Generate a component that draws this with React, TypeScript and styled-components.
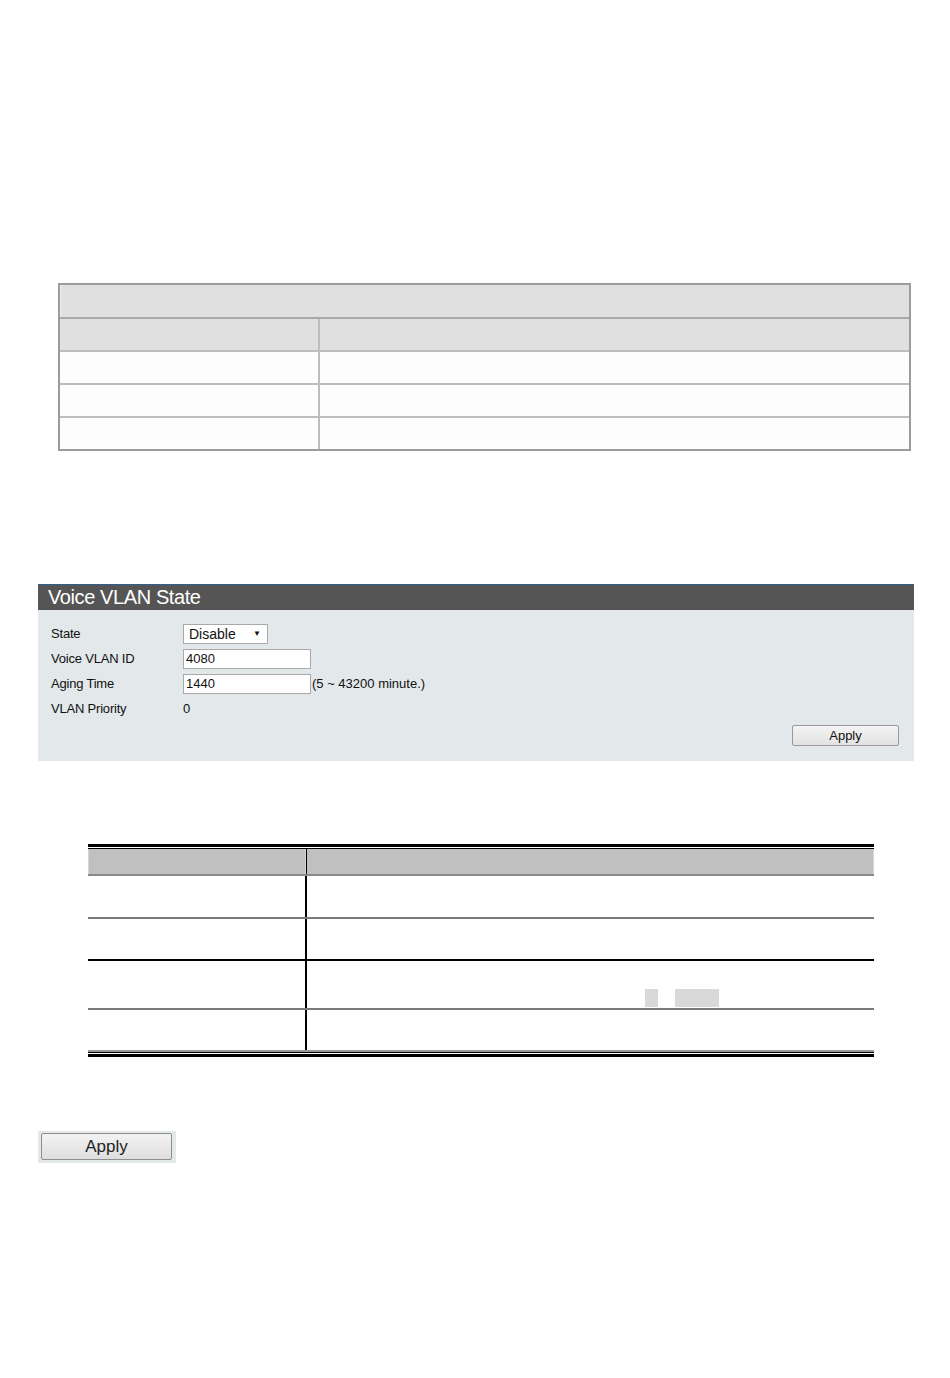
import React from "react";
import styled, { createGlobalStyle } from "styled-components";

const GlobalStyle = createGlobalStyle`
  html, body {
    margin: 0;
    padding: 0;
    background: #ffffff;
  }

  body {
    font-family: "Liberation Sans", Arial, sans-serif;
    color: #000;
  }
`;

const Page = styled.div`
  width: 950px;
  height: 1378px;
  padding-top: 283px;
  box-sizing: border-box;
`;

/* ---------- first (blank) table ---------- */

const GreyTable = styled.div`
  margin-left: 58px;
  width: 853px;
  border: 2px solid #9c9c9c;
  box-sizing: border-box;
  background: #fdfdfd;
`;

const GreyTitle = styled.div`
  height: 32px;
  background: #e0e0e0;
  border-bottom: 2px solid #a8a8a8;
  box-shadow: inset 8px 0 0 -7px #eeeeee;
`;

const GreyRow = styled.div<{ $head?: boolean; $last?: boolean }>`
  display: grid;
  grid-template-columns: 260px 1fr;
  height: 31px;
  background: ${(p) => (p.$head ? "#e0e0e0" : "#fdfdfd")};
  border-bottom: ${(p) => (p.$last ? "none" : "2px solid #bdbdbd")};
`;

const GreyCell = styled.div<{ $first?: boolean }>`
  border-right: ${(p) => (p.$first ? "2px solid #bdbdbd" : "none")};
`;

/* ---------- Voice VLAN panel ---------- */

const Panel = styled.section`
  margin-top: 133px;
  margin-left: 38px;
  width: 876px;
  background: #e3e8eb;
`;

const PanelHeader = styled.h2`
  margin: 0;
  height: 25px;
  border-top: 1px solid #2f5f8f;
  background: #555555;
  color: #ffffff;
  font-size: 20px;
  font-weight: normal;
  line-height: 24px;
  letter-spacing: -0.4px;
  padding-left: 10px;
`;

const PanelBody = styled.div`
  padding: 11px 15px 15px 13px;
  display: flex;
  flex-direction: column;
`;

const FormRow = styled.div`
  display: grid;
  grid-template-columns: 132px auto;
  align-items: center;
  height: 25px;
  font-size: 13px;
  color: #111;
`;

const Label = styled.span`
  letter-spacing: -0.2px;
`;

const Controls = styled.div`
  display: flex;
  align-items: center;
`;

const SelectBox = styled.div`
  width: 85px;
  height: 20px;
  box-sizing: border-box;
  border: 1px solid #a9a9a9;
  background: #ffffff;
  display: flex;
  align-items: center;
  justify-content: space-between;
  padding: 0 6px 0 5px;
  font-size: 14px;
`;

const Arrow = styled.span`
  font-size: 8px;
  line-height: 1;
`;

const TextInput = styled.input`
  width: 128px;
  height: 20px;
  box-sizing: border-box;
  border: 1px solid #a9a9a9;
  background: #ffffff;
  padding: 0 2px;
  margin: 0;
  font-family: "Liberation Sans", Arial, sans-serif;
  font-size: 13px;
  color: #111;
  outline: none;
`;

const Hint = styled.span`
  margin-left: 1px;
  font-size: 13px;
`;

const ButtonRow = styled.div`
  display: flex;
  justify-content: flex-end;
  margin-top: 4px;
`;

const SmallButton = styled.button`
  width: 107px;
  height: 21px;
  border: 1px solid #9a9a9a;
  border-radius: 2px;
  background: linear-gradient(#f4f4f4, #e2e2e2);
  font-family: "Liberation Sans", Arial, sans-serif;
  font-size: 13px;
  color: #111;
  padding: 0;
`;

/* ---------- second (blank) table ---------- */

const RuleTable = styled.div`
  margin-top: 83px;
  margin-left: 88px;
  width: 786px;
  border-top: 3px solid #000;
  border-bottom: 3px solid #000;
`;

const RuleHead = styled.div`
  margin-top: 1px;
  border-top: 1px solid #000;
  display: grid;
  grid-template-columns: 219px 1fr;
  height: 25px;
  background: #c0c0c0;
  border-bottom: 2px solid #8a8a8a;
`;

const HeadCell = styled.div<{ $first?: boolean }>`
  box-shadow: ${(p) =>
    p.$first
      ? "inset 10px 0 0 -9px #d6d6d6, inset -10px 0 0 -9px #d6d6d6"
      : "inset -1px 0 0 #d6d6d6"};
  border-right: ${(p) => (p.$first ? "1px solid #000" : "none")};
`;

const RuleRow = styled.div<{ $h: number; $line: string }>`
  display: grid;
  grid-template-columns: 219px 1fr;
  height: ${(p) => p.$h}px;
  border-bottom: 2px solid ${(p) => p.$line};
`;

const RuleCell = styled.div<{ $first?: boolean }>`
  border-right: ${(p) => (p.$first ? "2px solid #000" : "none")};
  position: relative;
`;

const Blot = styled.span<{ $left: number; $w: number }>`
  position: absolute;
  left: ${(p) => p.$left}px;
  bottom: 1px;
  width: ${(p) => p.$w}px;
  height: 18px;
  background: #d9d9d9;
`;

const BottomRule = styled.div`
  height: 1px;
  margin-bottom: 1px;
  background: #000;
`;

/* ---------- lone Apply button ---------- */

const ApplyFrame = styled.div`
  margin-top: 74px;
  margin-left: 38px;
  width: 138px;
  height: 32px;
  background: #e3e8eb;
  padding: 2px 4px 3px 3px;
  box-sizing: border-box;
`;

const BigButton = styled.button`
  width: 100%;
  height: 100%;
  border: 1px solid #8e8e8e;
  border-radius: 2px;
  background: linear-gradient(#f3f3f3, #dedede);
  font-family: "Liberation Sans", Arial, sans-serif;
  font-size: 17px;
  color: #222;
  padding: 0;
`;

const bodyRows = [
  { h: 41, line: "#7a7a7a" },
  { h: 40, line: "#000000" },
  { h: 47, line: "#7a7a7a", blots: true },
  { h: 40, line: "#9a9a9a" },
];

export default function App() {
  return (
    <Page>
      <GlobalStyle />

      <GreyTable>
        <GreyTitle />
        <GreyRow $head>
          <GreyCell $first />
          <GreyCell />
        </GreyRow>
        {[0, 1, 2].map((i) => (
          <GreyRow key={i} $last={i === 2}>
            <GreyCell $first />
            <GreyCell />
          </GreyRow>
        ))}
      </GreyTable>

      <Panel>
        <PanelHeader>Voice VLAN State</PanelHeader>
        <PanelBody>
          <FormRow>
            <Label>State</Label>
            <Controls>
              <SelectBox>
                <span>Disable</span>
                <Arrow>▼</Arrow>
              </SelectBox>
            </Controls>
          </FormRow>
          <FormRow>
            <Label>Voice VLAN ID</Label>
            <Controls>
              <TextInput defaultValue="4080" />
            </Controls>
          </FormRow>
          <FormRow>
            <Label>Aging Time</Label>
            <Controls>
              <TextInput defaultValue="1440" />
              <Hint>(5 ~ 43200 minute.)</Hint>
            </Controls>
          </FormRow>
          <FormRow>
            <Label>VLAN Priority</Label>
            <span>0</span>
          </FormRow>
          <ButtonRow>
            <SmallButton>Apply</SmallButton>
          </ButtonRow>
        </PanelBody>
      </Panel>

      <RuleTable>
        <RuleHead>
          <HeadCell $first />
          <HeadCell />
        </RuleHead>
        {bodyRows.map((r, i) => (
          <RuleRow key={i} $h={r.h} $line={r.line}>
            <RuleCell $first />
            <RuleCell>
              {r.blots && (
                <>
                  <Blot $left={338} $w={13} />
                  <Blot $left={368} $w={44} />
                </>
              )}
            </RuleCell>
          </RuleRow>
        ))}
        <BottomRule />
      </RuleTable>

      <ApplyFrame>
        <BigButton>Apply</BigButton>
      </ApplyFrame>
    </Page>
  );
}
